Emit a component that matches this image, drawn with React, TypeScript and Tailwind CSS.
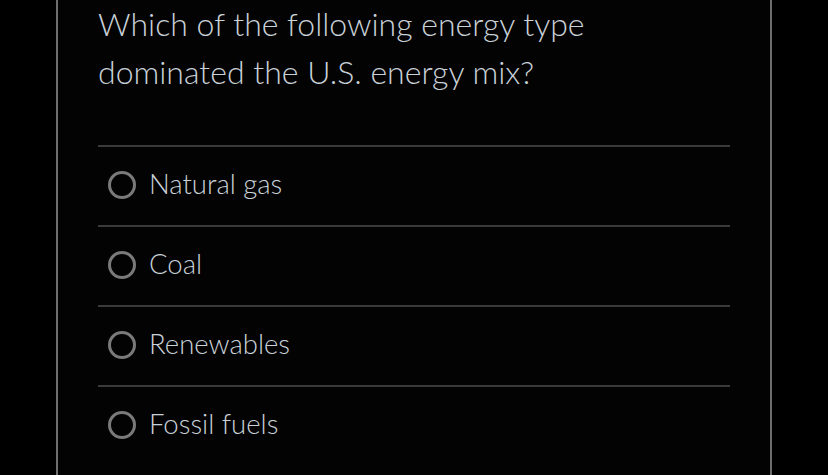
const options = ["Natural gas", "Coal", "Renewables", "Fossil fuels"];

export default function App() {
  return (
    <div className="w-[828px] h-[475px] bg-black overflow-hidden" style={{ fontFamily: "'Lato Light', Lato, 'Open Sans', sans-serif" }}>
      <div className="ml-[56px] w-[716px] h-full border-x-2 border-[#6e6e6e] bg-[#030303] pl-[40px] pr-[40px]">
        <h1 className="text-[32px] leading-[48px] font-light text-[#c9d1d9]">
          Which of the following energy type
          <br />
          dominated the U.S. energy mix?
        </h1>
        <div className="mt-[49px]">
          {options.map((opt) => (
            <label key={opt} className="flex items-center h-[80px] border-t-2 border-[#3a3a3a] pl-[10px] pb-[2px]">
              <span className="w-[28px] h-[28px] rounded-full border-[3px] border-[#7a7a7a] shrink-0" />
              <span className="ml-[13px] mb-[3px] text-[27.5px] font-light text-[#c9d1d9] leading-none">{opt}</span>
            </label>
          ))}
        </div>
      </div>
    </div>
  );
}
